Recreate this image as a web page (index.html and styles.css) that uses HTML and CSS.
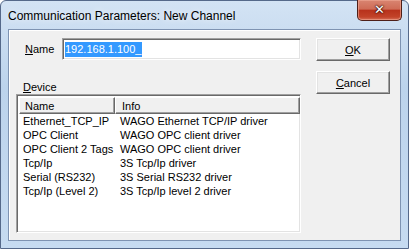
FILE: index.html
```html
<!DOCTYPE html>
<html>
<head>
<meta charset="utf-8">
<link rel="stylesheet" href="styles.css">
</head>
<body>
<div class="window">
  <div class="titlebar">
    <span class="title">Communication Parameters: New Channel</span>
    <div class="close"><span>✕</span></div>
  </div>
  <div class="client">
    <div class="left">
      <div class="namerow">
        <span class="label"><u>N</u>ame</span>
        <div class="input"><span class="sel">192.168.1.100_</span></div>
      </div>
      <div class="devlabel"><u>D</u>evice</div>
      <div class="list">
        <div class="header">
          <div class="hcell c1">Name</div>
          <div class="hcell c2">Info</div>
        </div>
        <div class="row"><span class="c1">Ethernet_TCP_IP</span><span class="c2">WAGO Ethernet TCP/IP driver</span></div>
        <div class="row"><span class="c1">OPC Client</span><span class="c2">WAGO OPC client driver</span></div>
        <div class="row"><span class="c1">OPC Client 2 Tags</span><span class="c2">WAGO OPC client driver</span></div>
        <div class="row"><span class="c1">Tcp/Ip</span><span class="c2">3S Tcp/Ip driver</span></div>
        <div class="row"><span class="c1">Serial (RS232)</span><span class="c2">3S Serial RS232 driver</span></div>
        <div class="row"><span class="c1">Tcp/Ip (Level 2)</span><span class="c2">3S Tcp/Ip level 2 driver</span></div>
      </div>
    </div>
    <div class="right">
      <div class="btn"><u>O</u>K</div>
      <div class="btn"><u>C</u>ancel</div>
    </div>
  </div>
</div>
</body>
</html>
```
FILE: styles.css
```css
html, body { margin: 0; padding: 0; }
body { width: 409px; height: 249px; overflow: hidden; background: #fff; }
.window {
  box-sizing: border-box;
  width: 409px; height: 249px;
  border: 1px solid #55698a;
  border-radius: 6px 6px 0 0;
  background: linear-gradient(to bottom, #d3e3f4 0%, #bcd3ec 35%, #c6dbf1 100%);
  display: flex; flex-direction: column;
  font-family: "Liberation Sans", Arial, sans-serif;
}
.titlebar {
  height: 28px; flex: none;
  display: flex; align-items: flex-start;
  position: relative;
}
.title {
  font-size: 12px; color: #000;
  margin: 8px 0 0 7px;
  text-shadow: 0 0 6px rgba(255,255,255,0.9);
}
.close {
  position: absolute; right: 6px; top: -1px;
  box-sizing: border-box;
  width: 45px; height: 21px;
  border: 1px solid #4e1f18; border-top: none;
  border-radius: 0 0 5px 5px;
  background: linear-gradient(to bottom, #d98571 0%, #cf6c56 45%, #b8321c 52%, #c24329 85%, #d8705a 100%);
  display: flex; align-items: center; justify-content: center;
  box-shadow: inset 0 0 0 1px rgba(240,170,150,0.6);
}
.close span {
  color: #fff; font-size: 13px; font-weight: bold; font-family: "DejaVu Sans", sans-serif;
  text-shadow: 0 0 1px #3a120c, 0 0 2px #3a120c, 0 0 2px #3a120c;
  margin-top: -2px;
}
.client {
  flex: 1;
  margin: 0 7px 7px 7px;
  border: 1px solid #7e93b2;
  background: #f0f0f0;
  display: flex;
  padding: 8px 0 0 7px;
  box-shadow: inset 1px 1px 0 #fff;
  font-size: 11px;
}
.left { width: 285px; display: flex; flex-direction: column; }
.namerow { display: flex; align-items: center; height: 22px; }
.label { width: 46px; padding-left: 9px; box-sizing: border-box; }
.input {
  box-sizing: border-box; width: 239px; height: 22px;
  background: #fff;
  border-top: 1px solid #a0a0a0; border-left: 1px solid #a0a0a0;
  border-right: 1px solid #fff; border-bottom: 1px solid #fff;
  box-shadow: inset 1px 1px 0 #696969, inset -1px -1px 0 #e3e3e3;
  padding: 3px 0 0 2px;
  font-size: 11px;
}
.sel { background: #3399ff; color: #fff; display: inline-block; line-height: 15px; padding-right: 1px; }
.devlabel { margin-top: 21px; padding-left: 7px; height: 13px; line-height: 13px; }
.list {
  box-sizing: border-box; width: 285px; height: 139px;
  background: #fff;
  border-top: 1px solid #a0a0a0; border-left: 1px solid #a0a0a0;
  border-right: 1px solid #fff; border-bottom: 1px solid #fff;
  box-shadow: inset 1px 1px 0 #696969, inset -1px -1px 0 #e3e3e3;
  padding: 2px 2px 0 2px;
  font-size: 11px;
}
.header { display: flex; height: 17px; width: 281px; }
.hcell {
  box-sizing: border-box; height: 17px;
  background: #f0f0f0;
  border-top: 1px solid #fff; border-left: 1px solid #fff;
  border-right: 1px solid #696969; border-bottom: 1px solid #696969;
  box-shadow: inset -1px -1px 0 #a0a0a0;
  padding: 1px 0 0 5px; line-height: 14px;
}
.hcell.c1 { width: 96px; }
.hcell.c2 { width: 185px; padding-left: 6px; }
.row { display: flex; height: 14px; line-height: 15px; }
.row .c1 { width: 96px; padding-left: 4px; box-sizing: border-box; white-space: nowrap; }
.row .c2 { padding-left: 5px; white-space: nowrap; }
.right { display: flex; flex-direction: column; margin-left: 15px; gap: 10px; }
.btn {
  box-sizing: border-box; width: 74px; height: 23px;
  background: #f0f0f0;
  border-top: 1px solid #fff; border-left: 1px solid #fff;
  border-right: 1px solid #696969; border-bottom: 1px solid #696969;
  box-shadow: inset -1px -1px 0 #a0a0a0, inset 1px 1px 0 #e3e3e3;
  display: flex; align-items: center; justify-content: center;
  font-size: 11px;
}
```
